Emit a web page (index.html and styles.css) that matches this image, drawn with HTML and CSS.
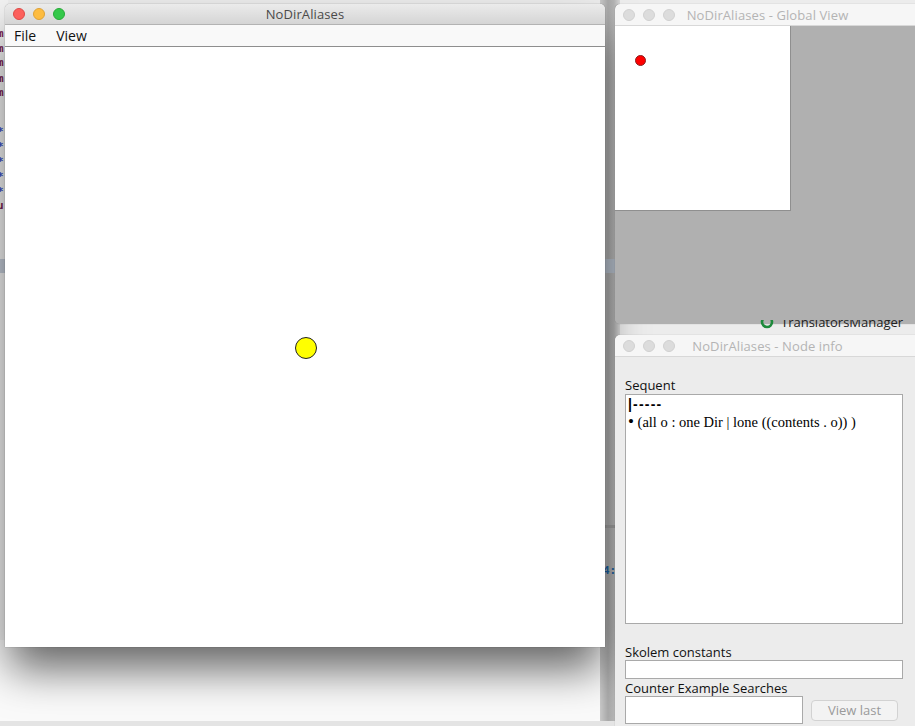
FILE: index.html
```html
<!DOCTYPE html>
<html>
<head>
<meta charset="utf-8">
<link rel="stylesheet" href="styles.css">
</head>
<body>
<div class="desktop">
  <div class="bg-left">
    <span class="code m" style="top:28px">m</span>
    <span class="code m" style="top:43px">m</span>
    <span class="code m" style="top:57px">m</span>
    <span class="code m" style="top:73px">m</span>
    <span class="code m" style="top:87px">m</span>
    <span class="code s" style="top:126px">*</span>
    <span class="code s" style="top:141px">*</span>
    <span class="code s" style="top:156px">*</span>
    <span class="code s" style="top:171px">*</span>
    <span class="code s" style="top:186px">*</span>
    <span class="code m" style="top:200px">u</span>
  </div>
  <div class="sel-left"></div>
  <div class="bg-shadow-area"></div>
  <div class="bg-mid"></div>
  <div class="sel-mid"></div>
  <div class="bg-mid-line"></div>
  <div class="bg-mid-4">4:</div>
  <div class="bg-bottom"></div>
  <div class="bg-tree">
    <svg class="tree-icon" width="14" height="14" viewBox="0 0 14 14"><circle cx="7" cy="7" r="5" fill="none" stroke="#1e8a3c" stroke-width="2.6"/></svg>
    <span>TranslatorsManager</span>
  </div>

  <div class="window main-win">
    <div class="titlebar active">
      <div class="lights">
        <span class="light red"></span>
        <span class="light yellow"></span>
        <span class="light green"></span>
      </div>
      <div class="title">NoDirAliases</div>
    </div>
    <div class="menubar">
      <span class="menu">File</span>
      <span class="menu">View</span>
    </div>
    <div class="canvas">
      <span class="node yellow-node" style="left:290px;top:290px"></span>
    </div>
  </div>

  <div class="window global-win">
    <div class="titlebar inactive">
      <div class="lights">
        <span class="light off"></span>
        <span class="light off"></span>
        <span class="light off"></span>
      </div>
      <div class="title">NoDirAliases - Global View</div>
    </div>
    <div class="overview">
      <div class="viewport">
        <span class="node red-node" style="left:20px;top:29px"></span>
      </div>
    </div>
  </div>

  <div class="window info-win">
    <div class="titlebar inactive">
      <div class="lights">
        <span class="light off"></span>
        <span class="light off"></span>
        <span class="light off"></span>
      </div>
      <div class="title">NoDirAliases - Node info</div>
    </div>
    <div class="info-body">
      <div class="label">Sequent</div>
      <div class="sequent">
        <div class="turnstile">|-----</div>
        <div class="formula"><span class="bullet">&bull;</span> (all o : one Dir | lone ((contents . o)) )</div>
      </div>
      <div class="label skolem-label">Skolem constants</div>
      <div class="field skolem"></div>
      <div class="label">Counter Example Searches</div>
      <div class="search-row">
        <div class="field searches"></div>
        <button class="btn">View last</button>
      </div>
    </div>
  </div>
</div>
</body>
</html>
```

FILE: styles.css
```css
* { box-sizing: border-box; }
html, body {
  margin: 0;
  padding: 0;
}
body {
  width: 915px;
  height: 726px;
  overflow: hidden;
  background: #ececec;
  font-family: "Open Sans", "DejaVu Sans", sans-serif;
}
.desktop {
  position: relative;
  width: 915px;
  height: 726px;
  overflow: hidden;
  background: #ececec;
}

/* background IDE remnants */
.bg-left {
  position: absolute;
  left: 0;
  top: 0;
  width: 8px;
  height: 650px;
  background: #f2f2f2;
}
.code {
  position: absolute;
  left: -3px;
  font-family: "DejaVu Sans Mono", monospace;
  font-size: 11px;
  line-height: 12px;
  font-weight: bold;
}
.code.m { color: #7a1c4e; }
.code.s { color: #3b4fc4; }
.sel-left {
  position: absolute;
  left: 0;
  top: 259px;
  width: 8px;
  height: 14px;
  background: #c4ccd8;
}
.bg-shadow-area {
  position: absolute;
  left: 0;
  top: 640px;
  width: 615px;
  height: 82px;
  background: #fafafa;
}
.bg-mid {
  position: absolute;
  left: 600px;
  top: 0;
  width: 20px;
  height: 726px;
  background: linear-gradient(to right, #c9c9c9, #a9a9a9 40%, #b4b4b4 70%, #d6d6d6);
}
.sel-mid {
  position: absolute;
  left: 605px;
  top: 259px;
  width: 10px;
  height: 14px;
  background: #b3bcc8;
}
.bg-mid-line {
  position: absolute;
  left: 605px;
  top: 525px;
  width: 10px;
  height: 3px;
  background: #9c9c9c;
}
.bg-mid-4 {
  position: absolute;
  left: 603px;
  top: 564px;
  font-family: "DejaVu Sans Mono", monospace;
  font-size: 11px;
  font-weight: bold;
  color: #1b5fa0;
}
.bg-bottom {
  position: absolute;
  left: 0;
  top: 721px;
  width: 615px;
  height: 5px;
  background: #e4e4e4;
}
.bg-tree {
  position: absolute;
  left: 760px;
  top: 313px;
  height: 18px;
  width: 155px;
  display: flex;
  align-items: center;
  gap: 7px;
  font-size: 13px;
  color: #222;
  z-index: 5;
  clip-path: inset(7px 0 0 0);
}
.tree-icon { flex: none; }

/* windows */
.window {
  position: absolute;
  display: flex;
  flex-direction: column;
  border-radius: 5px 5px 0 0;
  overflow: hidden;
}
.main-win {
  left: 5px;
  top: 4px;
  width: 600px;
  height: 643px;
  box-shadow: 0 26px 44px -4px rgba(0, 0, 0, 0.6), 0 0 1px rgba(0, 0, 0, 0.6);
  overflow: visible;
  z-index: 1;
  background: #fff;
}
.global-win {
  left: 615px;
  top: 4px;
  width: 305px;
  height: 320px;
  border-radius: 5px 5px 5px 5px;
  box-shadow: 0 0 1px rgba(0, 0, 0, 0.35);
  background: #b0b0b0;
  z-index: 2;
}
.info-win {
  left: 615px;
  top: 335px;
  width: 305px;
  height: 400px;
  box-shadow: 0 0 1px rgba(0, 0, 0, 0.35);
  background: #ececec;
  z-index: 2;
}

.titlebar {
  position: relative;
  flex: none;
  height: 21px;
  display: flex;
  align-items: center;
  justify-content: center;
  border-radius: 5px 5px 0 0;
}
.titlebar.active {
  background: linear-gradient(#ebebeb, #d5d5d5);
  border-bottom: 1px solid #b3b3b3;
}
.titlebar.inactive {
  height: 22px;
  background: #f6f6f6;
  border-bottom: 1px solid #d8d8d8;
}
.lights {
  position: absolute;
  left: 8px;
  top: 4px;
  display: flex;
  gap: 8px;
}
.light {
  width: 12px;
  height: 12px;
  border-radius: 50%;
}
.light.red { background: #fc605c; border: 1px solid #de4a46; }
.light.yellow { background: #fdbc40; border: 1px solid #dea236; }
.light.green { background: #34c84a; border: 1px solid #27aa37; }
.light.off { background: #dcdcdc; border: 1px solid #d0d0d0; }
.inactive .lights { top: 5px; }
.title {
  font-size: 13px;
  color: #4a4a4a;
  letter-spacing: 0.1px;
}
.inactive .title { color: #b4b4b4; }

.menubar {
  flex: none;
  height: 22px;
  background: #f9f9f9;
  border-bottom: 1px solid #8e8e8e;
  display: flex;
  align-items: center;
  padding-left: 9px;
  gap: 20px;
}
.menu {
  font-size: 14px;
  color: #111;
}
.canvas {
  position: relative;
  flex: 1;
  background: #fff;
}
.node {
  position: absolute;
  border-radius: 50%;
}
.yellow-node {
  width: 22px;
  height: 22px;
  background: #ffff00;
  border: 1px solid #222;
}
.red-node {
  width: 11px;
  height: 11px;
  background: #ff0000;
  border: 1px solid #8a2020;
}

.overview {
  flex: 1;
  background: #b0b0b0;
}
.viewport {
  position: relative;
  width: 176px;
  height: 185px;
  background: #fff;
  border-right: 1px solid #8f8f8f;
  border-bottom: 1px solid #8f8f8f;
}

.info-body {
  flex: 1;
  display: flex;
  flex-direction: column;
  padding: 20px 12px 0 10px;
}
.label {
  font-size: 13px;
  line-height: 16px;
  color: #111;
}
.sequent {
  margin-top: 1px;
  width: 278px;
  height: 230px;
  background: #fff;
  border: 1px solid #a9a9a9;
  padding: 1px 2px;
  font-family: "Liberation Serif", "Times New Roman", serif;
  font-size: 14.5px;
  color: #000;
}
.turnstile {
  font-family: "Liberation Sans", sans-serif;
  font-weight: bold;
  font-size: 14px;
  line-height: 17px;
  letter-spacing: 1.2px;
}
.formula {
  line-height: 19px;
}
.bullet {
  font-size: 17px;
  line-height: 10px;
}
.skolem-label {
  margin-top: 20px;
}
.field {
  background: #fff;
  border: 1px solid #a9a9a9;
}
.skolem {
  width: 278px;
  height: 19px;
  margin-bottom: 1px;
}
.search-row {
  display: flex;
  align-items: center;
  gap: 8px;
}
.searches {
  width: 178px;
  height: 28px;
}
.btn {
  width: 87px;
  height: 21px;
  border: 1px solid #d2d2d2;
  border-radius: 4px;
  background: #f3f3f3;
  font-family: "Open Sans", "DejaVu Sans", sans-serif;
  font-size: 13px;
  color: #9a9a9a;
  padding: 0;
}
```
